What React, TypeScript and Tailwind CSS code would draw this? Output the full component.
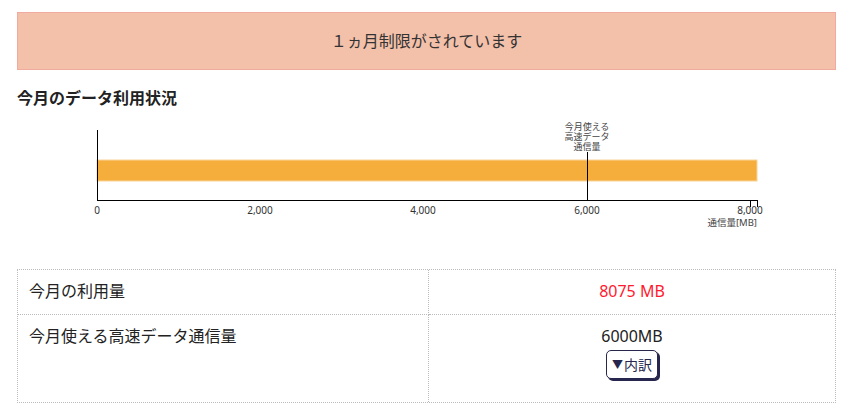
import React from "react";

const ticks = [
  { v: 0, x: 80, label: "0" },
  { v: 2000, x: 243, label: "2,000" },
  { v: 4000, x: 406, label: "4,000" },
  { v: 6000, x: 570, label: "6,000" },
  { v: 8000, x: 733, label: "8,000" },
];

function UsageChart() {
  return (
    <svg width={819} height={120} className="block mt-[8px]" fontFamily="'Noto Sans', 'Noto Sans CJK JP', sans-serif">
      {/* bar */}
      <rect x={80} y={42} width={660} height={21} fill="#f5ad3b" stroke="#f9d39a" strokeWidth={1} />
      {/* y axis */}
      <line x1={80.5} y1={12} x2={80.5} y2={82} stroke="#000" strokeWidth={1} />
      {/* x axis */}
      <line x1={80} y1={82.5} x2={741} y2={82.5} stroke="#000" strokeWidth={1} />
      <line x1={733.5} y1={82} x2={733.5} y2={89} stroke="#000" strokeWidth={1} />
      <line x1={740.5} y1={82} x2={740.5} y2={89} stroke="#000" strokeWidth={1} />
      {/* limit marker */}
      <line x1={570.5} y1={34} x2={570.5} y2={82} stroke="#000" strokeWidth={1} />
      <g fontSize={9} fill="#444" textAnchor="middle">
        <text x={570} y={12}>今月使える</text>
        <text x={570} y={22}>高速データ</text>
        <text x={570} y={32}>通信量</text>
      </g>
      <g fontSize={10} fill="#333" textAnchor="middle">
        {ticks.map((t) => (
          <text key={t.v} x={t.x} y={96}>
            {t.label}
          </text>
        ))}
      </g>
      <text x={740} y={108} fontSize={9.5} fill="#444" textAnchor="end">
        通信量[MB]
      </text>
    </svg>
  );
}

export default function App() {
  return (
    <div
      className="w-[851px] min-h-[417px] bg-white pt-[12px] px-[17px] text-[#222]"
      style={{ fontFamily: "'Noto Sans', 'Noto Sans CJK JP', sans-serif" }}
    >
      <div className="w-[819px] h-[58px] flex items-center justify-center bg-[#f3c0aa] border border-[#f0aaa0] text-[16px] text-[#333]">
        １ヵ月制限がされています
      </div>

      <h2 className="mt-[16px] text-[16px] leading-[24px] font-bold text-[#222]">今月のデータ利用状況</h2>

      <UsageChart />

      <div className="mt-[31px] w-[819px] border border-dotted border-[#bbb] grid grid-cols-[411px_1fr] text-[16px] leading-[24px]">
        <div className="h-[45px] pl-[11px] pt-[9px] border-r border-b border-dotted border-[#bbb]">今月の利用量</div>
        <div className="h-[45px] pt-[9px] text-center text-[#ff1a2e] border-b border-dotted border-[#bbb]">8075 MB</div>
        <div className="h-[87px] pl-[11px] pt-[9px] border-r border-dotted border-[#bbb]">今月使える高速データ通信量</div>
        <div className="h-[87px] pt-[9px] flex flex-col items-center">
          <div>6000MB</div>
          <button className="mt-[2px] h-[29px] px-[5px] flex items-center gap-[1px] rounded-[5px] border-[1.5px] border-[#26264e] bg-white text-[14px] text-[#26264e] shadow-[2px_2px_0_#26264e]">
            <span className="text-[11px]">▼</span>
            <span>内訳</span>
          </button>
        </div>
      </div>
    </div>
  );
}
